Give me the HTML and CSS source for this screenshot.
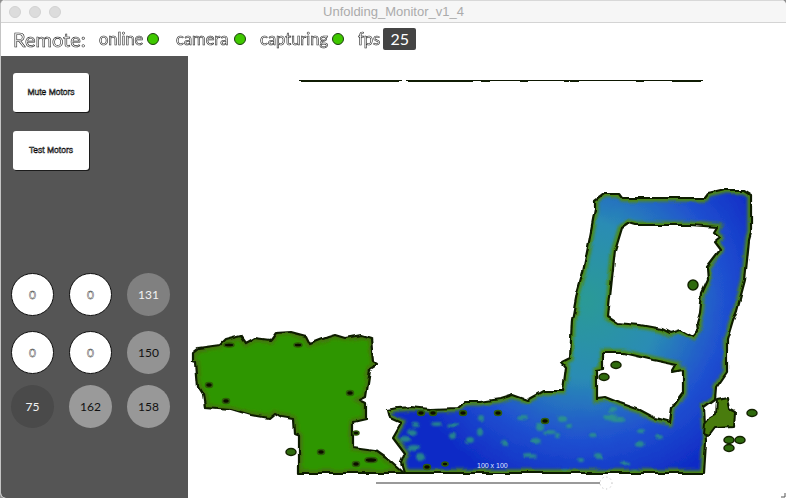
FILE: index.html
```html
<!DOCTYPE html>
<html lang="en">
<head>
<meta charset="utf-8">
<title>Unfolding_Monitor_v1_4</title>
<link rel="stylesheet" href="styles.css">
</head>
<body>
<div class="window">
  <header class="titlebar">
    <div class="lights"><span class="light"></span><span class="light"></span><span class="light"></span></div>
    <div class="title">Unfolding_Monitor_v1_4</div>
  </header>
  <div class="statusbar">
    <span class="remote">Remote:</span>
    <span class="status online"><span class="ghost">online</span><i class="led"></i></span>
    <span class="status camera"><span class="ghost">camera</span><i class="led"></i></span>
    <span class="status capturing"><span class="ghost">capturing</span><i class="led"></i></span>
    <span class="status fps"><span class="ghost">fps</span><b class="badge">25</b></span>
  </div>
  <div class="content">
    <aside class="sidebar">
      <button class="motor-btn">Mute Motors</button>
      <button class="motor-btn">Test Motors</button>
      <div class="dials">
        <div class="dial zero">0</div>
        <div class="dial zero">0</div>
        <div class="dial" style="background:#808080">131</div>
        <div class="dial zero">0</div>
        <div class="dial zero">0</div>
        <div class="dial dark-text" style="background:#939393">150</div>
        <div class="dial" style="background:#4a4a4a">75</div>
        <div class="dial dark-text" style="background:#9a9a9a">162</div>
        <div class="dial dark-text" style="background:#989898">158</div>
      </div>
    </aside>
    <main class="canvas">
      <svg class="map" viewBox="188 56 598 442" width="598" height="442" xmlns="http://www.w3.org/2000/svg">
        <defs>
          <radialGradient id="depth" gradientUnits="userSpaceOnUse" cx="585" cy="300" r="195">
            <stop offset="0" stop-color="#2a9a96"/>
            <stop offset=".4" stop-color="#2a8cb4"/>
            <stop offset=".72" stop-color="#1f50d0"/>
            <stop offset="1" stop-color="#0f2cc6"/>
          </radialGradient>
          <filter id="soft" x="-10%" y="-10%" width="120%" height="120%"><feGaussianBlur stdDeviation="1.600"/></filter>
          <filter id="speck" x="-50%" y="-50%" width="200%" height="200%"><feGaussianBlur stdDeviation="1.200"/></filter>
          <filter id="dotblur" x="-10%" y="-10%" width="120%" height="120%"><feGaussianBlur stdDeviation="0.600"/></filter>
          <filter id="rough" filterUnits="userSpaceOnUse" x="188" y="180" width="598" height="310">
            <feTurbulence type="fractalNoise" baseFrequency="0.075" numOctaves="1" seed="7" result="noise"/>
            <feDisplacementMap in="SourceGraphic" in2="noise" scale="6" xChannelSelector="R" yChannelSelector="G"/>
            <feGaussianBlur stdDeviation="0.400"/>
          </filter>
          <path id="frame" fill-rule="evenodd" d="M388 410 L398 408 411 407 430 409 458 408 465 402 480 402 500 399 513 395 527 400 543 391 563 391 566 367 562 362 570 358 572 320 577 293 583 272 589 242 595 210 595 200 603 194 620 194 623 198 705 198 708 194 725 190 743 190 751 195 751 233 749 240 745 280 737 310 733 320 727 340 727 372 716 388 715 400 704 408 706 442 704 473 404 473 401 463 405 453 393 437 401 423 390 418 Z
          M622 227 L628 223 635 225 690 225 717 227 714 232 720 237 714 242 720 250 707 267 708 280 702 293 700 313 697 323 698 331 693 337 680 330 670 333 662 329 640 325 617 323 608 317 610 297 615 250 Z
          M603 353 L623 353 653 360 677 365 673 372 683 370 683 393 672 408 670 422 655 418 640 410 620 403 605 397 597 398 597 370 603 369 Z"/>
          <path id="field" d="M193 352 L198 348 220 345 225 340 241 336 246 343 255 338 270 340 275 333 291 332 306 336 310 344 328 337 335 335 345 338 361 335 371 338 373 362 378 365 370 370 366 397 360 400 366 403 366 420 353 423 353 447 375 450 385 457 403 473 299 473 299 437 294 435 293 419 281 417 274 413 268 418 251 415 231 409 205 407 203 395 198 387 196 363 193 362 Z"/>
          <path id="blob" d="M717 399 L727 397 729 409 735 412 734 427 714 428 708 436 703 434 704 424 708 419 716 414 Z"/>
          <clipPath id="frameClip"><use href="#frame" clip-rule="evenodd"/></clipPath>
          <clipPath id="fieldClip"><use href="#field"/></clipPath>
        </defs>

        <path class="ridge" d="M299 80.500H402M406 80.500H703"/>
        <path class="ridge-thick" d="M301 81H399M408 81H473M481 81H490M520 81H528M564 81H569M570 81H579M636 81H644M672 81H701"/>

        <g filter="url(#rough)">
          <use href="#field" class="field-fill"/>
          <g clip-path="url(#fieldClip)"><use href="#field" class="glow-green" filter="url(#soft)"/></g>
          <use href="#field" class="edge"/>

          <use href="#frame" class="frame-fill"/>
          <g clip-path="url(#frameClip)">
            <g class="specks" filter="url(#speck)">
              <ellipse cx="405" cy="440" rx="6" ry="3"/><ellipse cx="412" cy="432" rx="5" ry="3"/><ellipse cx="416" cy="425" rx="4" ry="2"/>
              <ellipse cx="414" cy="448" rx="7" ry="3"/><ellipse cx="421" cy="458" rx="5" ry="4"/><ellipse cx="436" cy="424" rx="6" ry="2"/>
              <ellipse cx="453" cy="425" rx="6" ry="2"/><ellipse cx="452" cy="436" rx="4" ry="3"/><ellipse cx="480" cy="432" rx="3" ry="4"/>
              <ellipse cx="481" cy="418" rx="3" ry="3"/><ellipse cx="470" cy="440" rx="4" ry="3"/><ellipse cx="504" cy="443" rx="3" ry="3"/>
              <ellipse cx="523" cy="418" rx="5" ry="2"/><ellipse cx="540" cy="427" rx="4" ry="4"/><ellipse cx="549" cy="433" rx="6" ry="2"/>
              <ellipse cx="557" cy="436" rx="3" ry="2"/><ellipse cx="536" cy="441" rx="6" ry="3"/><ellipse cx="530" cy="456" rx="7" ry="2"/>
              <ellipse cx="562" cy="419" rx="4" ry="3"/><ellipse cx="569" cy="426" rx="3" ry="2"/><ellipse cx="592" cy="436" rx="4" ry="2"/>
              <ellipse cx="598" cy="456" rx="4" ry="3"/><ellipse cx="610" cy="417" rx="7" ry="3"/><ellipse cx="640" cy="432" rx="4" ry="2"/>
              <ellipse cx="660" cy="437" rx="4" ry="2"/><ellipse cx="640" cy="444" rx="4" ry="3"/><ellipse cx="625" cy="463" rx="4" ry="2"/>
              <ellipse cx="580" cy="460" rx="3" ry="2"/><ellipse cx="566" cy="470" rx="4" ry="2"/><ellipse cx="635" cy="471" rx="4" ry="2"/>
              <ellipse cx="618" cy="420" rx="8" ry="2"/><ellipse cx="612" cy="410" rx="4" ry="2"/>
            </g>
            <use href="#frame" class="glow" filter="url(#soft)"/>
          </g>
          <use href="#frame" class="edge"/>
          <use href="#blob" class="blob"/>
        </g>

        <g class="dots-green" filter="url(#dotblur)">
          <ellipse cx="752" cy="413" rx="5" ry="3.500"/>
          <ellipse cx="729" cy="440" rx="5" ry="3.500"/>
          <ellipse cx="740" cy="440" rx="5" ry="3.500"/>
          <ellipse cx="729" cy="448" rx="5" ry="3.500"/>
          <ellipse cx="616" cy="365" rx="5" ry="3.500"/>
          <ellipse cx="604" cy="377" rx="5" ry="3.500"/>
          <circle cx="693" cy="285" r="5"/>
          <ellipse cx="291" cy="452" rx="5" ry="3.500"/>
        </g>
        <g class="dots-black" filter="url(#dotblur)">
          <ellipse cx="209" cy="385" rx="3.500" ry="2.500"/><ellipse cx="226" cy="401" rx="3.500" ry="2.500"/><ellipse cx="350" cy="393" rx="3.500" ry="2.500"/>
          <ellipse cx="321" cy="452" rx="3.500" ry="2.500"/><ellipse cx="356" cy="464" rx="3.500" ry="2.500"/><ellipse cx="371" cy="460" rx="6" ry="2.500"/>
          <ellipse cx="356" cy="433" rx="3" ry="2"/><ellipse cx="229" cy="345" rx="5" ry="2"/><ellipse cx="298" cy="345" rx="4" ry="2"/>
          <ellipse cx="421" cy="413" rx="3.500" ry="2.500"/><ellipse cx="433" cy="413" rx="3.500" ry="2.500"/><ellipse cx="463" cy="413" rx="3.500" ry="2.500"/>
          <ellipse cx="427" cy="467" rx="3.500" ry="2.500"/><ellipse cx="445" cy="464" rx="3" ry="2"/>
          <ellipse cx="498" cy="413" rx="3.500" ry="2.500"/><ellipse cx="545" cy="421" rx="3.500" ry="2.500"/>
        </g>

        <text class="size-label" x="477" y="468">100 x 100</text>
        <path class="slider" d="M376 483H600"/>
        <circle class="thumb" cx="606" cy="483" r="6"/>
        <path class="grip" d="M781 497L785 497 785 493"/>
      </svg>
    </main>
  </div>
</div>
</body>
</html>
```
FILE: styles.css
```css
* { box-sizing: border-box; }
html, body { margin: 0; height: 100%; background: #8f8f8f; overflow: hidden; }
.window {
  width: 786px;
  height: 498px;
  display: flex;
  flex-direction: column;
  background: #fff;
  border-radius: 5px 5px 0 5px;
  border-left: 1px solid #c4c4c4;
  overflow: hidden;
  font-family: Lato, "Open Sans", sans-serif;
}
.titlebar {
  height: 23px;
  flex: none;
  display: flex;
  align-items: center;
  position: relative;
  background: #f6f6f6;
  border-top: 1px solid #d8d8d8;
  border-bottom: 1px solid #d4d4d4;
}
.lights { display: flex; gap: 8px; padding-left: 8px; }
.light { width: 12px; height: 12px; border-radius: 50%; background: #dcdcdc; border: 1px solid #d2d2d2; }
.title {
  position: absolute;
  left: 0;
  right: 0;
  text-align: center;
  font: 13px "Liberation Sans", Arial, sans-serif;
  color: #ababab;
}
.statusbar {
  height: 33px;
  flex: none;
  display: flex;
  align-items: center;
  padding: 0 0 2px 12px;
  background: #fff;
}
.remote, .ghost {
  color: #fff;
  -webkit-text-stroke: 0.6px #222;
  will-change: opacity;
}
.remote { font-size: 20px; width: 86px; }
.ghost { font-size: 16.500px; }
.status { display: flex; align-items: center; }
.online { width: 77px; }
.camera { width: 84px; }
.capturing { width: 98px; }
.led {
  width: 12px;
  height: 12px;
  margin-left: 4px;
  border-radius: 50%;
  background: #3fc800;
  border: 1px solid #1c3d10;
}
.camera .led { margin-left: 6px; }
.badge {
  width: 33px;
  height: 22px;
  margin-left: 3px;
  display: flex;
  align-items: center;
  justify-content: center;
  background: #444;
  border-radius: 2px;
  color: #fff;
  font-size: 16px;
  font-weight: 400;
}
.content { flex: 1; display: flex; min-height: 0; }
.sidebar {
  width: 187px;
  flex: none;
  display: flex;
  flex-direction: column;
  align-items: flex-start;
  padding-top: 17px;
  background: #555;
  border-bottom-left-radius: 5px;
}
.motor-btn {
  width: 76px;
  height: 39px;
  margin: 0 0 19px 12px;
  padding: 0 0 1px;
  border: 0;
  border-radius: 3px;
  background: #fff;
  box-shadow: 1px 1px 0 #1c1c1c;
  font-family: "Liberation Sans", Arial, sans-serif;
  font-size: 8.500px;
  color: #fff;
  -webkit-text-stroke: 0.5px #000;
}
.dials {
  margin: 84px 0 0 10px;
  display: grid;
  grid-template-columns: repeat(3, 43px);
  grid-template-rows: 47px 43px 43px;
  column-gap: 15px;
  row-gap: 11px;
  font-size: 12px;
}
.dial {
  width: 43px;
  height: 43px;
  display: flex;
  align-items: center;
  justify-content: center;
  border-radius: 50%;
  color: #f2f2f2;
}
.zero {
  background: #fff;
  border: 1px solid #111;
  color: #fff;
  -webkit-text-stroke: 0.4px #111;
}
.dark-text { color: #111; }
.canvas { flex: 1; min-width: 0; background: #fff; }
.map { display: block; }
.ridge { fill: none; stroke: #0c1600; stroke-width: 1; }
.ridge-thick { fill: none; stroke: #101c04; stroke-width: 2; }
.field-fill { fill: #2f9600; }
.glow-green { fill: none; stroke: #44750e; stroke-width: 7; }
.frame-fill { fill: url(#depth); fill-rule: evenodd; }
.glow { fill: none; stroke: #4f8a0e; stroke-width: 7; }
.edge { fill: none; stroke: #0f1c00; stroke-width: 2.200; stroke-linejoin: round; }
.specks { fill: #2fa07c; opacity: 0.75; }
.blob { fill: #4a7c0a; stroke: #0f1c00; stroke-width: 2; stroke-linejoin: round; }
.dots-green { fill: #2f6a0c; stroke: #122200; stroke-width: 1.500; }
.dots-black { fill: #0a1002; stroke: #2f5a08; stroke-width: 1.500; }
.size-label { font: 7px "Liberation Sans", Arial, sans-serif; fill: #dfe6ff; }
.slider { fill: none; stroke: #9a9a9a; stroke-width: 2; }
.thumb { fill: #fff; stroke: #bbb; stroke-width: 1; stroke-dasharray: 1 3; }
.grip { fill: none; stroke: #555; stroke-width: 1; }
```
